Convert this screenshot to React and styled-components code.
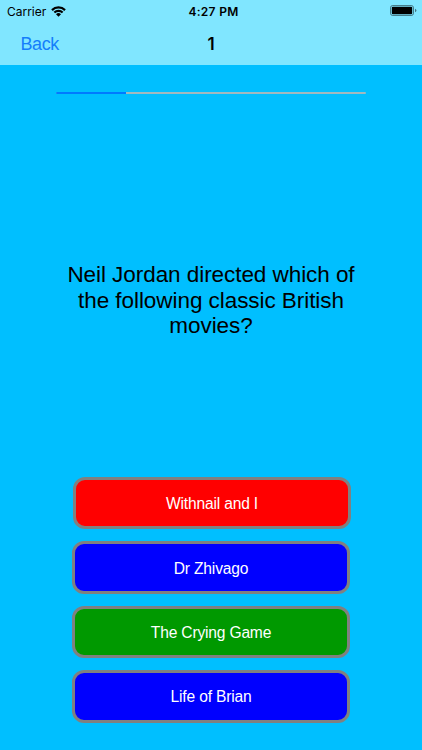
import styled, { createGlobalStyle } from "styled-components"

const answers = [
    { id: 1, title: "Withnail and I", color: "#ff0000", shift: 1 },
    { id: 2, title: "Dr Zhivago", color: "#0000ff" },
    { id: 3, title: "The Crying Game", color: "#009900" },
    { id: 4, title: "Life of Brian", color: "#0000ff" },
]

const WifiIcon = () => (
    <Wifi viewBox="0 0 15 11">
        <path d="M0.2 3.3 A10.4 10.4 0 0 1 14.8 3.3 L13.3 4.9 A8.4 8.4 0 0 0 1.7 4.9 Z" />
        <path d="M2.6 5.8 A7 7 0 0 1 12.4 5.8 L10.9 7.3 A4.9 4.9 0 0 0 4.1 7.3 Z" />
        <path d="M5 8.2 A3.6 3.6 0 0 1 10 8.2 L7.5 10.7 Z" />
    </Wifi>
)

const BatteryIcon = () => (
    <Battery viewBox="0 0 27 12">
        <rect x="0.5" y="0.5" width="23" height="10" rx="2.2" fill="none" stroke="#000" strokeOpacity="0.45" />
        <rect x="1.8" y="1.8" width="20.4" height="7.4" rx="1" />
        <path d="M25 3.8 Q26.4 4.3 26.4 5.5 Q26.4 6.7 25 7.2 Z" fillOpacity="0.5" />
    </Battery>
)

const App = () => {
    return (
        <Screen>
            <GlobalStyle />
            <Header>
                <StatusBar>
                    <Carrier>Carrier <WifiIcon /></Carrier>
                    <Time>4:27 PM</Time>
                    <BatteryIcon />
                </StatusBar>
                <NavBar>
                    <Back>Back</Back>
                    <Title>1</Title>
                </NavBar>
            </Header>
            <Track>
                <Progress />
            </Track>
            <Question>
                Neil Jordan directed which of<br />
                the following classic British<br />
                movies?
            </Question>
            <Answers>
                {answers.map((el) => (
                    <Answer key={el.id} $color={el.color} $shift={el.shift}>{el.title}</Answer>
                ))}
            </Answers>
        </Screen>
    )
}

const GlobalStyle = createGlobalStyle`
body {
    margin: 0;
    background-color: #00bfff;
}
* {
    box-sizing: border-box;
}
`
const Screen = styled.div`
width: 422px;
height: 750px;
display: flex;
flex-direction: column;
overflow: hidden;
background-color: #00bfff;
font-family: "Liberation Sans", Arial, sans-serif;
`
const Header = styled.header`
height: 65px;
flex-shrink: 0;
background-color: #80e6ff;
`
const StatusBar = styled.div`
height: 22px;
display: grid;
grid-template-columns: 1fr auto 1fr;
align-items: center;
padding: 0 5px 0 7px;
font-family: Inter, sans-serif;
color: #000;
`
const Carrier = styled.div`
display: flex;
align-items: center;
gap: 5px;
font-size: 12px;
letter-spacing: -.02px;
`
const Time = styled.div`
font-size: 12px;
font-weight: 600;
letter-spacing: .3px;
padding-left: 3px;
`
const Wifi = styled.svg`
width: 15px;
height: 11px;
`
const Battery = styled.svg`
width: 27px;
height: 12px;
justify-self: end;
`
const NavBar = styled.nav`
height: 43px;
display: grid;
grid-template-columns: 1fr auto 1fr;
align-items: center;
padding: 0 20px;
`
const Back = styled.a`
padding: 1px 0 0 .5px;
font-size: 18px;
letter-spacing: -.4px;
color: #147efb;
`
const Title = styled.h1`
margin: 0;
font-family: Inter, sans-serif;
font-size: 17px;
font-weight: 600;
color: #000;
`
const Track = styled.div`
width: 310px;
height: 2px;
flex-shrink: 0;
margin: 27px 0 0 56px;
border-radius: 1px;
background-color: #a2b9bf;
overflow: hidden;
`
const Progress = styled.div`
width: 70px;
height: 100%;
background-color: #007aff;
`
const Question = styled.p`
margin: 168px 0 0;
height: 78px;
flex-shrink: 0;
text-align: center;
font-size: 22.5px;
letter-spacing: -.06px;
line-height: 25.7px;
color: #000;
white-space: nowrap;
`
const Answers = styled.div`
display: flex;
flex-direction: column;
gap: 12px;
margin: 137px 0 0 72px;
`
const Answer = styled.button`
width: 278px;
height: 52.4px;
margin: 0 0 0 ${({ $shift }) => $shift || 0}px;
padding: 2px 0 0;
border: 3px solid #808080;
border-radius: 12px;
background-color: ${({ $color }) => $color};
color: #fff;
font-family: inherit;
font-size: 15.6px;
letter-spacing: -.18px;
`

export default App
